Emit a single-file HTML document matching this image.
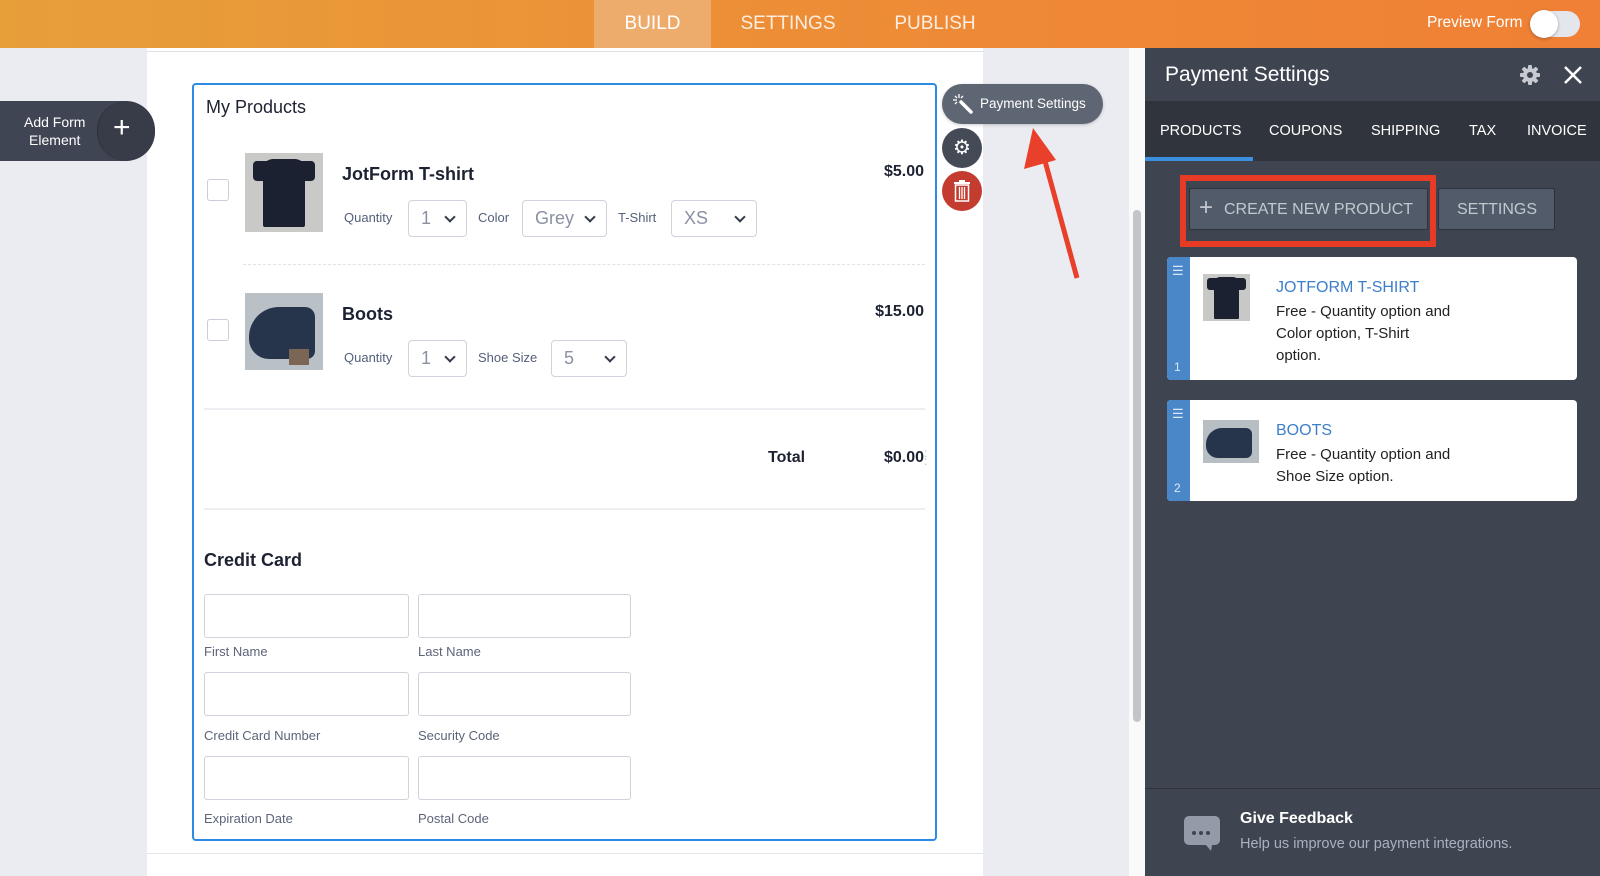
<!DOCTYPE html>
<html><head><meta charset="utf-8"><style>
*{box-sizing:border-box;margin:0;padding:0}
body{width:1600px;height:876px;overflow:hidden;position:relative;background:#ebecf1;font-family:"Liberation Sans",sans-serif;}
.abs{position:absolute}
.hdr{left:0;top:0;width:1600px;height:48px;background:linear-gradient(90deg,#e79f3a,#ee8a36 60%,#ef8035)}
.tab{top:0;height:48px;line-height:48px;color:#fbeee0;font-size:19px;text-align:center}
.canvas{left:147px;top:48px;width:836px;height:828px;background:#fff}
.box{left:192px;top:83px;width:745px;height:758px;border:2px solid #2c8be3;border-radius:4px}
.t{position:absolute;white-space:nowrap}
.sel{position:absolute;height:37px;border:1px solid #cfd3dc;border-radius:4px;background:#fff;color:#8a91a3;font-size:18px;line-height:35px;padding-left:12px}
.sel:after{content:"";position:absolute;right:12px;top:12px;width:6px;height:6px;border-right:2px solid #333a48;border-bottom:2px solid #333a48;transform:rotate(45deg)}
.lbl{position:absolute;font-size:13px;color:#55607a}
.cb{position:absolute;width:22px;height:22px;border:1px solid #c9ced8;border-radius:3px}
.inp{position:absolute;height:44px;border:1px solid #cfd3dc;border-radius:3px}
.flbl{position:absolute;font-size:13px;color:#5c6479}
.panel{left:1145px;top:48px;width:455px;height:828px;background:#3f4550}
.ptab{top:123px;color:#fff;font-size:14.5px}
.card{position:absolute;left:1167px;width:410px;background:#fff;border-radius:4px;overflow:hidden}
.strip{position:absolute;left:0;top:0;bottom:0;width:23px;background:#4a87c8}
</style></head><body>
<div class="abs hdr"></div>
<div class="abs tab" style="left:594px;width:117px;background:#eeac6c;color:#fff">BUILD</div>
<div class="abs tab" style="left:728px;width:120px">SETTINGS</div>
<div class="abs tab" style="left:875px;width:120px">PUBLISH</div>
<div class="t" style="left:1427px;top:14px;color:#fff;font-size:15.5px">Preview Form</div>
<div class="abs" style="left:1530px;top:11px;width:50px;height:26px;border-radius:13px;background:#e3e6ea"></div>
<div class="abs" style="left:1530px;top:10px;width:28px;height:28px;border-radius:14px;background:#fff;box-shadow:0 1px 3px rgba(0,0,0,.3)"></div>

<div class="abs canvas"></div>
<div class="abs" style="left:147px;top:51px;width:836px;height:1px;background:#dfe1e8"></div>
<div class="abs" style="left:147px;top:853px;width:836px;height:1px;background:#e3e5ea"></div>
<div class="abs" style="left:1129px;top:48px;width:16px;height:828px;background:#fafafa"></div>
<div class="abs" style="left:1133px;top:210px;width:8px;height:512px;border-radius:4px;background:#c3c5c9"></div>

<div class="abs" style="left:0;top:101px;width:155px;height:60px;background:#3f4552;border-radius:0 30px 30px 0"></div>
<div class="abs" style="left:97px;top:101px;width:58px;height:60px;border-radius:30px;background:#373c48;border-left:1px solid #2b2f38"></div>
<div class="t" style="left:24px;top:113px;color:#fff;font-size:14px;line-height:18px;text-align:center">Add Form<br>Element</div>
<div class="t" style="left:113px;top:113px;color:#fff;font-size:30px;line-height:30px;font-weight:300">+</div>

<div class="abs box"></div>
<div class="t" style="left:206px;top:97px;font-size:18px;color:#1d2233">My Products</div>
<div class="cb" style="left:207px;top:179px"></div>
<div class="abs" style="left:245px;top:153px;width:78px;height:79px;background:#c9c9c7"><div class="abs" style="left:18px;top:6px;width:42px;height:68px;background:#1b2130;border-radius:10px 10px 2px 2px"></div><div class="abs" style="left:8px;top:8px;width:62px;height:20px;background:#1b2130;border-radius:4px"></div></div>
<div class="t" style="left:342px;top:164px;font-size:18px;font-weight:bold;color:#1d2233">JotForm T-shirt</div>
<div class="t" style="left:878px;top:163px;width:46px;text-align:right;font-size:16px;font-weight:bold;color:#1d2233">$5.00</div>
<div class="lbl" style="left:344px;top:210px">Quantity</div>
<div class="sel" style="left:408px;top:200px;width:59px">1</div>
<div class="lbl" style="left:478px;top:210px">Color</div>
<div class="sel" style="left:522px;top:200px;width:85px">Grey</div>
<div class="lbl" style="left:618px;top:210px">T-Shirt</div>
<div class="sel" style="left:671px;top:200px;width:86px">XS</div>
<div class="abs" style="left:243px;top:264px;width:682px;border-top:1px dashed #e0e2e8"></div>

<div class="cb" style="left:207px;top:319px"></div>
<div class="abs" style="left:245px;top:293px;width:78px;height:77px;background:#b9c0c6"><div class="abs" style="left:4px;top:14px;width:66px;height:52px;background:#26354c;border-radius:30px 10px 8px 20px"></div><div class="abs" style="left:44px;top:56px;width:20px;height:16px;background:#7b6656"></div></div>
<div class="t" style="left:342px;top:304px;font-size:18px;font-weight:bold;color:#1d2233">Boots</div>
<div class="t" style="left:864px;top:303px;width:60px;text-align:right;font-size:16px;font-weight:bold;color:#1d2233">$15.00</div>
<div class="lbl" style="left:344px;top:350px">Quantity</div>
<div class="sel" style="left:408px;top:340px;width:59px">1</div>
<div class="lbl" style="left:478px;top:350px">Shoe Size</div>
<div class="sel" style="left:551px;top:340px;width:76px">5</div>
<div class="abs" style="left:204px;top:408px;width:721px;height:2px;background:#eceef2"></div>
<div class="t" style="left:768px;top:449px;font-size:16px;font-weight:bold;color:#1d2233">Total</div>
<div class="t" style="left:878px;top:449px;width:46px;text-align:right;font-size:16px;font-weight:bold;color:#1d2233">$0.00</div>
<div class="t" style="left:924px;top:449px;font-size:12px;color:#b8bcc6;line-height:8px">:<br>:</div>
<div class="abs" style="left:204px;top:508px;width:721px;height:2px;background:#eceef2"></div>
<div class="t" style="left:204px;top:550px;font-size:18px;font-weight:bold;color:#1d2233">Credit Card</div>
<div class="inp" style="left:204px;top:594px;width:205px"></div><div class="inp" style="left:418px;top:594px;width:213px"></div>
<div class="flbl" style="left:204px;top:644px">First Name</div><div class="flbl" style="left:418px;top:644px">Last Name</div>
<div class="inp" style="left:204px;top:672px;width:205px"></div><div class="inp" style="left:418px;top:672px;width:213px"></div>
<div class="flbl" style="left:204px;top:728px">Credit Card Number</div><div class="flbl" style="left:418px;top:728px">Security Code</div>
<div class="inp" style="left:204px;top:756px;width:205px"></div><div class="inp" style="left:418px;top:756px;width:213px"></div>
<div class="flbl" style="left:204px;top:811px">Expiration Date</div><div class="flbl" style="left:418px;top:811px">Postal Code</div>

<div class="abs" style="left:942px;top:84px;width:161px;height:40px;border-radius:20px;background:#5f6673;box-shadow:0 1px 3px rgba(0,0,0,.2)"></div>
<svg class="abs" style="left:952px;top:93px" width="22" height="22" viewBox="0 0 22 22"><path d="M9 9L19 19" stroke="#fff" stroke-width="3.5" stroke-linecap="round"/><path d="M7 1v4M1 7h4M3 3l2 2M11 3l-2 2M3 11l2-2" stroke="#fff" stroke-width="1.3"/></svg>
<div class="t" style="left:980px;top:96px;color:#fff;font-size:13.5px">Payment Settings</div>
<div class="abs" style="left:942px;top:128px;width:40px;height:40px;border-radius:20px;background:#444a56"></div>
<div class="t" style="left:953px;top:135px;color:#fff;font-size:20px">⚙</div>
<div class="abs" style="left:942px;top:171px;width:40px;height:40px;border-radius:20px;background:#c43b2f"></div>
<svg class="abs" style="left:954px;top:180px" width="16" height="22" viewBox="0 0 16 22"><rect x="0" y="2" width="16" height="2" fill="#fff"/><rect x="5" y="0" width="6" height="2" fill="#fff"/><rect x="1.5" y="5" width="13" height="16" fill="none" stroke="#fff" stroke-width="1.5"/><path d="M5.5 7v12M8 7v12M10.5 7v12" stroke="#fff" stroke-width="1.3"/></svg>
<svg class="abs" style="left:1000px;top:110px" width="100" height="180" viewBox="0 0 100 180"><path d="M77 168L42 40" stroke="#e8402a" stroke-width="5"/><path d="M33 18L24 59L56 50Z" fill="#e8402a"/></svg>

<div class="abs panel"></div>
<div class="t" style="left:1165px;top:63px;color:#fff;font-size:21px">Payment Settings</div>
<svg class="abs" style="left:1520px;top:65px" width="20" height="20" viewBox="0 0 20 20"><g fill="#c7cad0"><circle cx="10" cy="10" r="7"/><rect x="8" y="0" width="4" height="20" rx="1"/><rect x="0" y="8" width="20" height="4" rx="1"/><rect x="8" y="0" width="4" height="20" rx="1" transform="rotate(45 10 10)"/><rect x="8" y="0" width="4" height="20" rx="1" transform="rotate(-45 10 10)"/></g><circle cx="10" cy="10" r="3" fill="#3f4550"/></svg>
<svg class="abs" style="left:1563px;top:65px" width="20" height="20"><path d="M2 2L18 18M18 2L2 18" stroke="#fff" stroke-width="2.5"/></svg>
<div class="abs" style="left:1145px;top:101px;width:455px;height:60px;background:#30343d"></div>
<div class="abs" style="left:1145px;top:157px;width:108px;height:4px;background:#3d8fe0"></div>
<div class="t ptab" style="left:1160px">PRODUCTS</div>
<div class="t ptab" style="left:1269px">COUPONS</div>
<div class="t ptab" style="left:1371px">SHIPPING</div>
<div class="t ptab" style="left:1469px">TAX</div>
<div class="t ptab" style="left:1527px">INVOICE</div>
<div class="abs" style="left:1180px;top:175px;width:256px;height:72px;border:6px solid #e73b25"></div>
<div class="abs" style="left:1189px;top:188px;width:239px;height:42px;background:#525b69;border:1px solid #2e333b;border-radius:2px"></div>
<div class="t" style="left:1199px;top:195px;color:#c3c8d0;font-size:24px;line-height:26px">+</div>
<div class="t" style="left:1224px;top:201px;color:#c3c8d0;font-size:16px">CREATE NEW PRODUCT</div>
<div class="abs" style="left:1438px;top:188px;width:117px;height:42px;background:#525b69;border:1px solid #2e333b;border-radius:2px"></div>
<div class="t" style="left:1457px;top:201px;color:#c3c8d0;font-size:16px">SETTINGS</div>

<div class="card" style="top:257px;height:123px"><div class="strip"></div>
<div class="t" style="left:5px;top:6px;color:#dce8f6;font-size:13px">☰</div><div class="t" style="left:7px;top:103px;color:#dce8f6;font-size:12px">1</div>
<div class="abs" style="left:36px;top:17px;width:47px;height:47px;background:#c8c8c6"><div class="abs" style="left:11px;top:3px;width:25px;height:42px;background:#1b2130;border-radius:6px 6px 1px 1px"></div><div class="abs" style="left:4px;top:4px;width:39px;height:12px;background:#1b2130;border-radius:3px"></div></div>
<div class="t" style="left:109px;top:22px;color:#3d7fc9;font-size:16px">JOTFORM T-SHIRT</div>
<div class="t" style="left:109px;top:44px;color:#222;font-size:15px;line-height:22px">Free - Quantity option and<br>Color option, T-Shirt<br>option.</div></div>
<div class="card" style="top:400px;height:101px"><div class="strip"></div>
<div class="t" style="left:5px;top:6px;color:#dce8f6;font-size:13px">☰</div><div class="t" style="left:7px;top:81px;color:#dce8f6;font-size:12px">2</div>
<div class="abs" style="left:36px;top:20px;width:56px;height:43px;background:#b7bec4"><div class="abs" style="left:3px;top:8px;width:46px;height:30px;background:#26354c;border-radius:16px 6px 6px 12px"></div></div>
<div class="t" style="left:109px;top:22px;color:#3d7fc9;font-size:16px">BOOTS</div>
<div class="t" style="left:109px;top:44px;color:#222;font-size:15px;line-height:22px">Free - Quantity option and<br>Shoe Size option.</div></div>

<div class="abs" style="left:1145px;top:788px;width:455px;height:1px;background:#30343c"></div>
<svg class="abs" style="left:1184px;top:816px" width="36" height="36" viewBox="0 0 36 36"><path d="M5 0h26a5 5 0 0 1 5 5v19a5 5 0 0 1-5 5h-3l-1 6-5-6H5a5 5 0 0 1-5-5V5a5 5 0 0 1 5-5z" fill="#939aa8"/><circle cx="10" cy="17" r="2" fill="#3f4550"/><circle cx="17" cy="17" r="2" fill="#3f4550"/><circle cx="24" cy="17" r="2" fill="#3f4550"/></svg>
<div class="t" style="left:1240px;top:810px;color:#fff;font-size:16px;font-weight:bold">Give Feedback</div>
<div class="t" style="left:1240px;top:836px;color:#a9b1c0;font-size:14.5px">Help us improve our payment integrations.</div>
</body></html>
